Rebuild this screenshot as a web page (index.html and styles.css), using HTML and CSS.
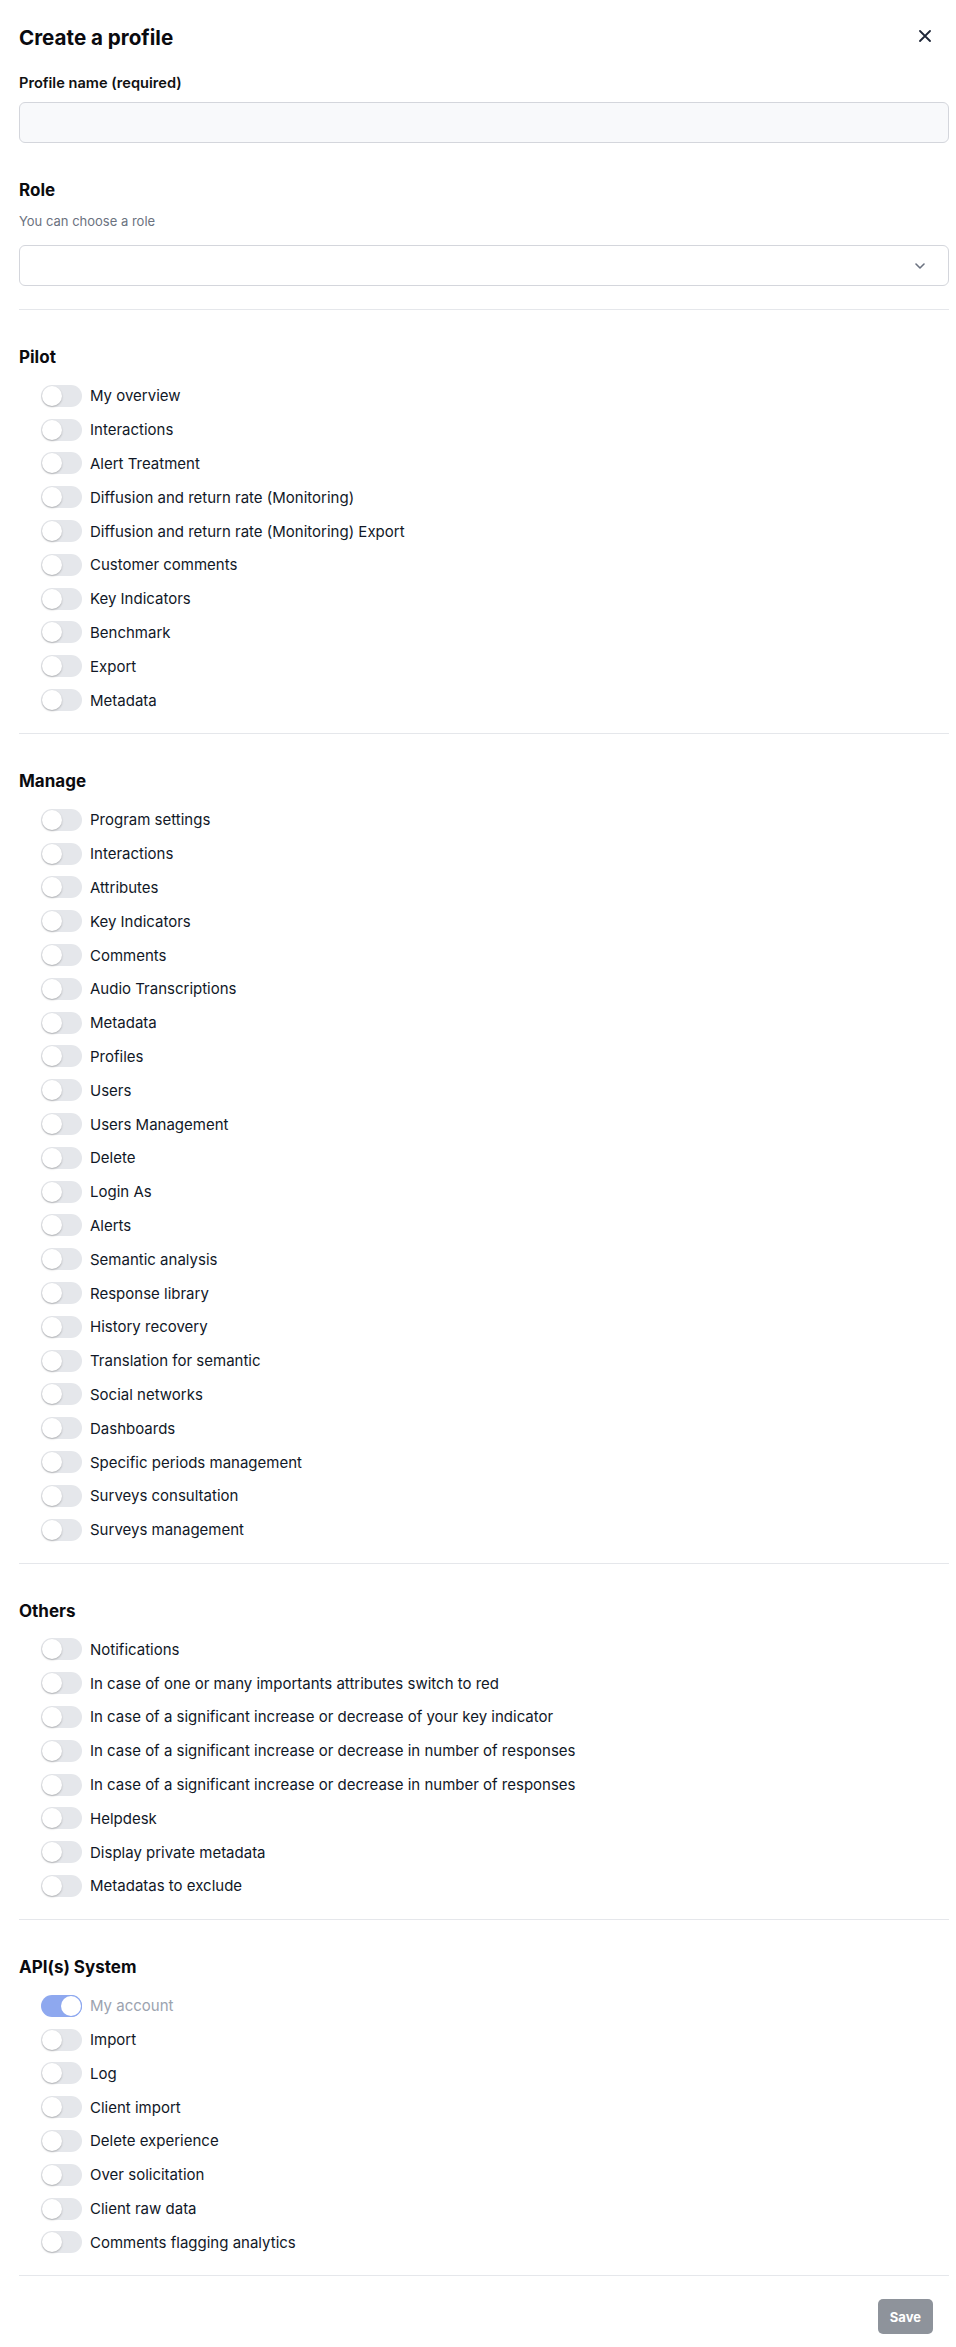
FILE: index.html
```
<!DOCTYPE html>
<html>
<head>
    <meta charset="utf-8">
    <title>Create a profile</title>
    <link rel="stylesheet" href="styles.css">
</head>
<body>

<div class="dialog">
    <div class="dialog_header">
        <h1>Create a profile</h1>
        <button type="button" class="close_btn" aria-label="Close">
            <svg width="12" height="12" viewBox="0 0 12 12"><path d="M1 1L11 11M11 1L1 11" stroke="#1e2638" stroke-width="1.8" stroke-linecap="round"/></svg>
        </button>
    </div>

    <label class="field_label" for="profileName">Profile name (required)</label>
    <input id="profileName" class="text_input" type="text">

    <h2 class="role_title">Role</h2>
    <p class="hint">You can choose a role</p>
    <div class="select_box">
        <svg width="10" height="6" viewBox="0 0 10 6"><path d="M1 1L5 5L9 1" fill="none" stroke="#6b7280" stroke-width="1.6" stroke-linecap="round" stroke-linejoin="round"/></svg>
    </div>

    <hr class="divider">

    <!-- Pilot -->
    <h2 class="section_title">Pilot</h2>
    <ul class="perm_list">
        <li class="perm"><span class="switch"></span>My overview</li>
        <li class="perm"><span class="switch"></span>Interactions</li>
        <li class="perm"><span class="switch"></span>Alert Treatment</li>
        <li class="perm"><span class="switch"></span>Diffusion and return rate (Monitoring)</li>
        <li class="perm"><span class="switch"></span>Diffusion and return rate (Monitoring) Export</li>
        <li class="perm"><span class="switch"></span>Customer comments</li>
        <li class="perm"><span class="switch"></span>Key Indicators</li>
        <li class="perm"><span class="switch"></span>Benchmark</li>
        <li class="perm"><span class="switch"></span>Export</li>
        <li class="perm"><span class="switch"></span>Metadata</li>
    </ul>

    <hr class="divider">

    <!-- Manage -->
    <h2 class="section_title">Manage</h2>
    <ul class="perm_list">
        <li class="perm"><span class="switch"></span>Program settings</li>
        <li class="perm"><span class="switch"></span>Interactions</li>
        <li class="perm"><span class="switch"></span>Attributes</li>
        <li class="perm"><span class="switch"></span>Key Indicators</li>
        <li class="perm"><span class="switch"></span>Comments</li>
        <li class="perm"><span class="switch"></span>Audio Transcriptions</li>
        <li class="perm"><span class="switch"></span>Metadata</li>
        <li class="perm"><span class="switch"></span>Profiles</li>
        <li class="perm"><span class="switch"></span>Users</li>
        <li class="perm"><span class="switch"></span>Users Management</li>
        <li class="perm"><span class="switch"></span>Delete</li>
        <li class="perm"><span class="switch"></span>Login As</li>
        <li class="perm"><span class="switch"></span>Alerts</li>
        <li class="perm"><span class="switch"></span>Semantic analysis</li>
        <li class="perm"><span class="switch"></span>Response library</li>
        <li class="perm"><span class="switch"></span>History recovery</li>
        <li class="perm"><span class="switch"></span>Translation for semantic</li>
        <li class="perm"><span class="switch"></span>Social networks</li>
        <li class="perm"><span class="switch"></span>Dashboards</li>
        <li class="perm"><span class="switch"></span>Specific periods management</li>
        <li class="perm"><span class="switch"></span>Surveys consultation</li>
        <li class="perm"><span class="switch"></span>Surveys management</li>
    </ul>

    <hr class="divider">

    <!-- Others -->
    <h2 class="section_title">Others</h2>
    <ul class="perm_list">
        <li class="perm"><span class="switch"></span>Notifications</li>
        <li class="perm"><span class="switch"></span>In case of one or many importants attributes switch to red</li>
        <li class="perm"><span class="switch"></span>In case of a significant increase or decrease of your key indicator</li>
        <li class="perm"><span class="switch"></span>In case of a significant increase or decrease in number of responses</li>
        <li class="perm"><span class="switch"></span>In case of a significant increase or decrease in number of responses</li>
        <li class="perm"><span class="switch"></span>Helpdesk</li>
        <li class="perm"><span class="switch"></span>Display private metadata</li>
        <li class="perm"><span class="switch"></span>Metadatas to exclude</li>
    </ul>

    <hr class="divider">

    <!-- API(s) System -->
    <h2 class="section_title">API(s) System</h2>
    <ul class="perm_list">
        <li class="perm disabled"><span class="switch on"></span>My account</li>
        <li class="perm"><span class="switch"></span>Import</li>
        <li class="perm"><span class="switch"></span>Log</li>
        <li class="perm"><span class="switch"></span>Client import</li>
        <li class="perm"><span class="switch"></span>Delete experience</li>
        <li class="perm"><span class="switch"></span>Over solicitation</li>
        <li class="perm"><span class="switch"></span>Client raw data</li>
        <li class="perm"><span class="switch"></span>Comments flagging analytics</li>
    </ul>

    <hr class="divider">

    <div class="dialog_footer">
        <button type="button" class="save_btn">Save</button>
    </div>
</div>

</body>
</html>
```

FILE: styles.css
```
body {
    margin: 0;
    background: #ffffff;
    font-family: Inter, "Noto Sans", sans-serif;
    color: #111827;
}

.dialog {
    padding: 24px 7px 11px 19px;
}

.dialog_header {
    display: flex;
    justify-content: space-between;
    align-items: center;
    height: 28px;
    padding-right: 16px;
}

h1 {
    margin: 0;
    font-size: 20.6px;
    line-height: 28px;
    font-weight: 700;
    color: #0b0b0f;
}

.close_btn {
    display: flex;
    align-items: center;
    justify-content: center;
    width: 16px;
    height: 16px;
    padding: 0;
    border: none;
    background: none;
    margin-top: -4px;
}

.field_label {
    display: block;
    margin-top: 21px;
    font-size: 14.6px;
    line-height: 20px;
    font-weight: 600;
    color: #111111;
}

.text_input {
    display: block;
    box-sizing: border-box;
    width: 100%;
    height: 41px;
    margin-top: 9px;
    border: 1px solid #d4d6dc;
    border-radius: 6px;
    background: #f8f9fb;
}

.role_title,
.section_title {
    margin: 0;
    font-size: 17px;
    line-height: 24px;
    font-weight: 700;
    color: #0b0b0f;
}

.role_title {
    margin-top: 35px;
}

.hint {
    margin: 11px 0 0;
    font-size: 13px;
    line-height: 16px;
    color: #6b7280;
}

.select_box {
    box-sizing: border-box;
    height: 41px;
    margin-top: 16px;
    border: 1px solid #d4d6dc;
    border-radius: 6px;
    background: #ffffff;
    display: flex;
    align-items: center;
    justify-content: flex-end;
    padding-right: 23px;
}

.divider {
    margin: 16px 0 0;
    border: none;
    border-top: 1px solid #e5e7eb;
}

.select_box + .divider {
    margin-top: 23px;
}

.section_title {
    margin: 35px 0 10px;
}

.perm_list {
    list-style: none;
    margin: 0;
    padding: 0 0 0 22px;
}

.perm {
    display: flex;
    align-items: center;
    height: 33.8px;
    font-size: 15px;
    color: #111827;
}

.perm.disabled {
    color: #9ca3af;
}

.switch {
    position: relative;
    flex: none;
    width: 41px;
    height: 22px;
    margin-right: 8px;
    border-radius: 11px;
    background: #e5e7eb;
}

.switch::after {
    content: "";
    position: absolute;
    top: 1px;
    left: 1px;
    width: 20px;
    height: 20px;
    border-radius: 50%;
    background: #ffffff;
    box-shadow: 0 1px 2px rgba(0, 0, 0, 0.25);
}

.switch.on {
    background: #8ea8ef;
}

.switch.on::after {
    left: 20px;
    box-shadow: 0 0 0 1px #8ea8ef;
}

.dialog_footer {
    display: flex;
    justify-content: flex-end;
    padding: 23px 16px 0 0;
}

.save_btn {
    height: 35px;
    padding: 0 12px;
    border: none;
    border-radius: 5px;
    background: #8e939b;
    color: #ffffff;
    font-family: Inter, "Noto Sans", sans-serif;
    font-size: 13px;
    font-weight: 700;
}
```
